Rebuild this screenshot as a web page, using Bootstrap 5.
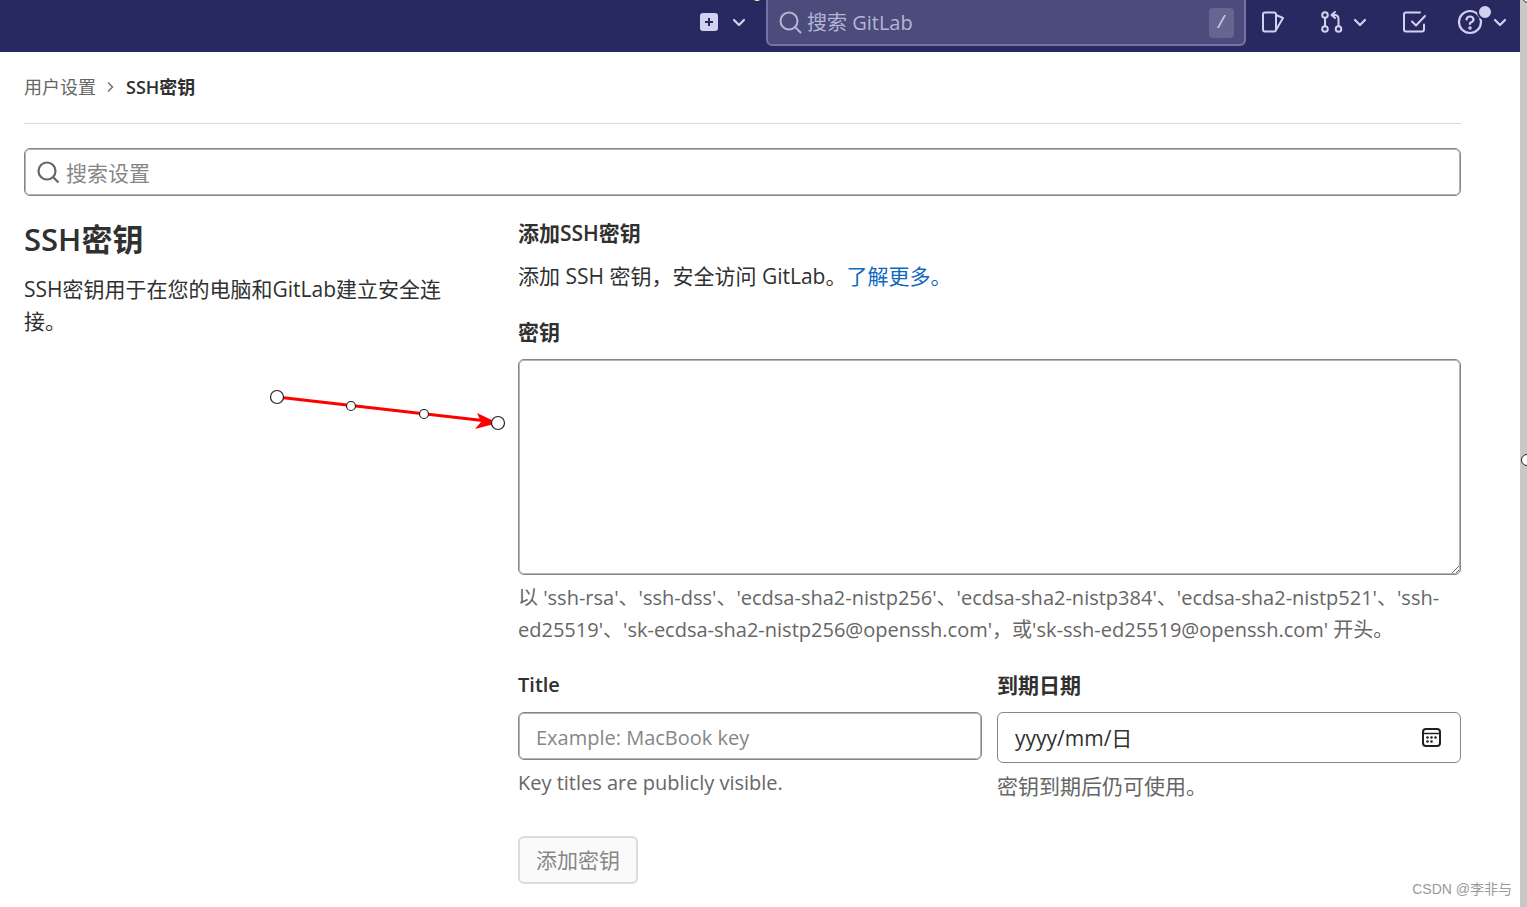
<!DOCTYPE html>
<html lang="zh-CN">
<head>
<meta charset="utf-8">
<meta name="viewport" content="width=device-width, initial-scale=1">
<title>SSH密钥 · 用户设置 · GitLab</title>
<link rel="stylesheet" href="https://cdn.jsdelivr.net/npm/bootstrap@5.3.0/dist/css/bootstrap.min.css">
<style>
  body { font-family: "Open Sans", "Noto Sans CJK SC", sans-serif; font-size: 21px; line-height: 32px; color: #303030; background: #fff; }
  .latin { font-size: 20px !important; }
  .shell { padding-right: 7px; min-height: 100vh; background: #c8c8c8; overflow: hidden; }
  .page-body { min-height: 100vh; background: #fff; }
  .topbar { height: 52px; background: #292961; color: #d1d1f0; padding-right: 13px; }
  .topbar svg, .field-icon { flex: none; display: block; }
  .topbar button { background: none; border: 0; padding: 0; color: inherit; }
  .global-search { width: 480px; height: 50px; margin-top: -4px; padding: 4px 10px 0 11px; border: 2px solid #7474a4; border-radius: 6px; background: #4b4b7c; color: #b5b5d6; }
  .global-search input { color: inherit; }
  .bare-input { border: 0; outline: 0; background: transparent; padding: 0; min-width: 0; font-size: 21px; line-height: 30px; }
  .global-search ::placeholder { color: #b5b5d6; opacity: 1; }
  .slash { width: 25px; height: 30px; line-height: 30px; font-size: 18px; border-radius: 4px; background: #656592; color: #d1d1f0; text-align: center; }
  .content { padding: 0 59px 23px 24px; }
  .crumbs { height: 72px; font-size: 18px; border-bottom: 1px solid #dbdbdb; padding-bottom: 2px; }
  .crumbs a { color: #666; text-decoration: none; }
  .crumbs .current { color: #303030; font-weight: 600; }
  .outlined { border: 1px solid #868686; border-radius: 6px; box-shadow: inset 0 0 0 1px #b5b5b5; background: #fff; }
  .settings-search { height: 48px; margin: 24px 0 21px; padding: 2px 12px 0; }
  .settings-search ::placeholder, .title-field::placeholder { color: #868686; opacity: 1; }
  .wide-gutter { --bs-gutter-x: 45px; }
  .narrow-gutter { --bs-gutter-x: 15px; }
  h1 { font-size: 31px; line-height: 44px; font-weight: 600; margin: 0 0 12px; }
  h2, .field-label { font-size: 21px; line-height: 32px; font-weight: 600; margin: 0; display: block; }
  .hint { color: #666; }
  .intro { margin: 11px 0 24px; }
  .intro a { color: #1068bf; text-decoration: none; }
  .key-box { display: block; width: 100%; height: 216px; margin: 11px 0 7px; padding: 12px 18px; }
  .formats { margin-bottom: 23px; }
  .field-gap { margin-bottom: 11px; }
  .hint-gap { margin-top: 7px; }
  .title-field { width: 100%; height: 48px; padding: 2px 17px 0; font-size: 20px; color: #303030; }
  .date-field { height: 51px; border: 1px solid #868686; border-radius: 6px; padding: 0 17px; }
  .date-field input { color: #303030; }
  .date-field button { border: 0; background: none; padding: 0; }
  .submit { height: 48px; width: 120px; border: 2px solid #dbdbdb; border-radius: 6px; background: #fafafa; color: #868686; padding: 0; margin-top: 34px; }
  .overlay { position: absolute; overflow: visible; pointer-events: none; }
  .arrow-mark { left: 268px; top: 388px; }
  .handle-top { left: 750px; top: -10px; }
  .handle-corner { right: -8px; top: -10px; }
  .handle-side { right: -7px; top: 452px; }
  .watermark { position: absolute; right: 15px; bottom: 7px; font: 14px/22px "Liberation Sans", "Noto Sans CJK SC", sans-serif; color: #999; }
</style>
</head>
<body>
<div class="shell position-relative">
  <div class="page-body">
    <header class="topbar d-flex justify-content-end align-items-start">
      <button class="d-flex align-items-center" aria-label="新建">
        <svg class="mt-2" width="66" height="28" viewBox="0 0 66 28" fill="none"><rect y="5" width="18" height="18" rx="3" fill="#d1d1f0"/><path d="M9 10v8M5 14h8" stroke="#292961" stroke-width="2"/><path d="M34 12l5 5 5-5" stroke="#d1d1f0" stroke-width="2.2" stroke-linecap="round" stroke-linejoin="round"/></svg>
      </button>
      <label class="global-search d-flex align-items-center">
        <svg width="24" height="24" viewBox="0 0 24 24" fill="none" stroke="currentColor" stroke-width="2"><circle cx="10" cy="10" r="8.500"/><path d="M16 16l5.500 5.500" stroke-linecap="round"/></svg>
        <input class="bare-input latin flex-grow-1 ms-1" type="search" placeholder="搜索 GitLab" aria-label="搜索 GitLab">
        <kbd class="slash p-0">/</kbd>
      </label>
      <button aria-label="议题"><svg width="60" height="44" viewBox="0 0 60 44" fill="none" stroke="#d1d1f0" stroke-width="2" stroke-linejoin="round"><rect x="17" y="12.500" width="13" height="19" rx="2"/><path d="M30 15l7 3-7 12"/></svg></button>
      <button aria-label="合并请求"><svg width="80" height="44" viewBox="0 0 80 44" fill="none" stroke="#d1d1f0" stroke-width="2" stroke-linecap="round" stroke-linejoin="round"><circle cx="19" cy="15" r="2.800"/><circle cx="19" cy="29" r="2.800"/><path d="M19 18v8"/><circle cx="32.500" cy="29" r="2.800"/><path d="M32.500 26v-7q0-4-4-4h-2M29 12l-3.500 3 3.500 3"/><path d="M49 20l5 5 5-5" stroke-width="2.200"/></svg></button>
      <button aria-label="待办事项"><svg width="56" height="44" viewBox="0 0 56 44" fill="none" stroke="#d1d1f0" stroke-width="2" stroke-linecap="round" stroke-linejoin="round"><path d="M34 12.500H20q-2 0-2 2v15q0 2 2 2h16q2 0 2-2v-5M26 21.500l4 4 9-9.500"/></svg></button>
      <button aria-label="帮助"><svg width="65" height="44" viewBox="0 0 65 44" fill="none" stroke="#d1d1f0" stroke-width="2.200" stroke-linecap="round" stroke-linejoin="round"><circle cx="28" cy="22" r="11"/><path d="M24.500 19.500q.5-3 3.500-3t3.500 3q0 2-3.500 3.500v1"/><circle cx="28" cy="28" r=".7"/><circle cx="43" cy="12" r="7" fill="#d1d1f0" stroke="#292961" stroke-width="2"/><path d="M53 20l5 5 5-5"/></svg></button>
    </header>

    <main class="content">
      <nav class="crumbs d-flex align-items-center" aria-label="面包屑">
        <a href="#">用户设置</a>
        <svg class="mx-2" width="14" height="14" viewBox="0 0 14 14" fill="none" stroke="#777" stroke-width="1.600"><path d="M4 2.500l4.500 4.500-4.500 4.500"/></svg>
        <a href="#" class="current" aria-current="page">SSH密钥</a>
      </nav>
      <label class="settings-search outlined d-flex align-items-center">
        <svg class="field-icon" width="25" height="24" viewBox="0 0 25 24" fill="none" stroke="#666" stroke-width="2.200"><circle cx="10" cy="10" r="8.500"/><path d="M16 16l5.500 5.500"/></svg>
        <input class="bare-input flex-grow-1 ms-1" type="search" placeholder="搜索设置" aria-label="搜索设置">
      </label>

      <div class="row wide-gutter">
        <div class="col-4">
          <h1>SSH密钥</h1>
          <p>SSH密钥用于在您的电脑和GitLab建立安全连接。</p>
        </div>
        <form class="col-8">
          <h2>添加SSH密钥</h2>
          <p class="intro">添加 SSH 密钥，安全访问 GitLab。<a href="#">了解更多。</a></p>
          <label class="field-label" for="key">密钥</label>
          <textarea id="key" class="key-box outlined"></textarea>
          <p class="hint latin formats">以 'ssh-rsa'、'ssh-dss'、'ecdsa-sha2-nistp256'、'ecdsa-sha2-nistp384'、'ecdsa-sha2-nistp521'、'ssh-ed25519'、'sk-ecdsa-sha2-nistp256@openssh.com'，或'sk-ssh-ed25519@openssh.com' 开头。</p>
          <div class="row narrow-gutter">
            <div class="col-6">
              <label class="field-label field-gap latin" for="title">Title</label>
              <input id="title" class="title-field outlined d-block" type="text" placeholder="Example: MacBook key">
              <div class="hint hint-gap latin">Key titles are publicly visible.</div>
            </div>
            <div class="col-6">
              <label class="field-label field-gap" for="expires">到期日期</label>
              <div class="date-field d-flex align-items-center">
                <input id="expires" class="bare-input flex-grow-1" type="text" value="yyyy/mm/日">
                <button type="button" aria-label="选择日期"><svg class="field-icon" width="22" height="22" viewBox="0 0 22 22" fill="none" stroke="#202020" stroke-width="2"><rect x="2" y="2" width="17" height="17" rx="3"/><path d="M2 6.500h17" stroke-width="1.500"/><g fill="#202020" stroke="none"><circle cx="6.500" cy="10.500" r="1.300"/><circle cx="10.500" cy="10.500" r="1.300"/><circle cx="14.500" cy="10.500" r="1.300"/><circle cx="6.500" cy="14.500" r="1.300"/><circle cx="10.500" cy="14.500" r="1.300"/></g></svg></button>
              </div>
              <div class="hint hint-gap">密钥到期后仍可使用。</div>
            </div>
          </div>
          <button class="submit" type="submit" disabled>添加密钥</button>
        </form>
      </div>
    </main>
  </div>

  <svg class="overlay arrow-mark" width="240" height="46" viewBox="0 0 240 46"><path d="M9 9l210 24" stroke="red" stroke-width="3"/><path d="M230 35l-23 6 6-7-4-9z" fill="red"/><g fill="#fff" stroke="#222" stroke-width="1.200"><circle cx="9" cy="9" r="6.500"/><circle cx="83" cy="18" r="4.500"/><circle cx="156" cy="26" r="4.500"/><circle cx="230" cy="35" r="6.500"/></g></svg>
  <svg class="overlay handle-top" width="14" height="12"><circle cx="7" cy="6" r="5.500" fill="#fff" stroke="#222"/></svg>
  <svg class="overlay handle-corner" width="14" height="14"><circle cx="7" cy="7" r="5.500" fill="#fff" stroke="#222"/></svg>
  <svg class="overlay handle-side" width="14" height="16"><circle cx="7" cy="8" r="5.500" fill="#fff" stroke="#222"/></svg>
  <div class="watermark">CSDN @李非与</div>
</div>
<script src="https://cdn.jsdelivr.net/npm/bootstrap@5.3.0/dist/js/bootstrap.bundle.min.js"></script>
</body>
</html>
